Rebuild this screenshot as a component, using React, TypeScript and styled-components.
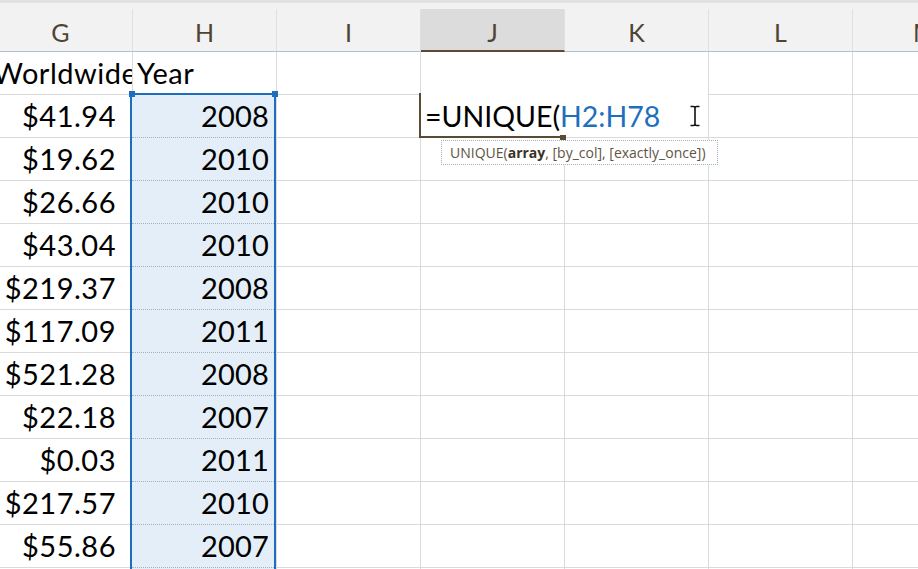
import React from "react";
import styled, { createGlobalStyle } from "styled-components";

const GRID = "#dadada";
const BROWN = "#5c4a32";
const BLUE = "#1e6ec0";

const GlobalStyle = createGlobalStyle`
  html, body { margin: 0; padding: 0; background: #fff; overflow: hidden; }
  body { font-family: Lato, "Noto Sans", sans-serif; }
`;

const Page = styled.div`
  width: 918px;
  height: 569px;
  overflow: hidden;
  background: #fff;
  display: flex;
  flex-direction: column;
`;

const TopStrip = styled.div`
  flex: none;
  height: 3px;
  background: #e1e1e1;
`;

const HeaderRow = styled.div`
  flex: none;
  display: flex;
  height: 49px;
  box-sizing: border-box;
  padding-top: 6px;
  margin-left: -11px;
  background: #f2f2f2;
`;

const HeaderCell = styled.div<{ $selected?: boolean }>`
  flex: none;
  width: 144px;
  height: 43px;
  box-sizing: border-box;
  padding-top: 8px;
  border-right: 1px solid #d9e2eb;
  border-bottom: ${(p) => (p.$selected ? `2px solid ${BROWN}` : "1px solid #b3bfcb")};
  background: ${(p) => (p.$selected ? "#dcdcdc" : "transparent")};
  text-align: center;
  font-family: Lato, sans-serif;
  font-size: 25px;
  line-height: 30px;
  color: #4d4434;
`;

const Sheet = styled.div`
  flex: 1;
  display: flex;
  align-items: flex-start;
  margin-left: -11px;
`;

const Column = styled.div`
  flex: none;
  width: 144px;
  display: flex;
  flex-direction: column;
`;

const Cell = styled.div<{ $align?: "left" | "right"; $padRight?: number }>`
  flex: none;
  height: 43px;
  box-sizing: border-box;
  border-right: 1px solid ${GRID};
  border-bottom: 1px solid ${GRID};
  padding: 4px ${(p) => p.$padRight ?? 6}px 0 4px;
  text-align: ${(p) => p.$align ?? "left"};
  font-family: Lato, sans-serif;
  font-size: 29px;
  letter-spacing: 0.5px;
  line-height: 34px;
  color: #000;
  white-space: nowrap;
  overflow: hidden;
`;

const Selection = styled.div`
  flex: none;
  position: relative;
  width: 146px;
  margin: -2px 0 0 -3px;
  box-sizing: border-box;
  border: 2px solid ${BLUE};
  border-bottom: none;
  background: #e3eef9;
  box-shadow: 1px 0 0 ${GRID};
  display: flex;
  flex-direction: column;

  &::before,
  &::after {
    content: "";
    position: absolute;
    top: -4px;
    width: 6px;
    height: 6px;
    background: ${BLUE};
  }
  &::before { left: -3px; }
  &::after { right: -4px; }
`;

const SelCell = styled.div`
  flex: none;
  height: 43px;
  box-sizing: border-box;
  border-bottom: 1px dotted #a9b2bc;
  padding: 4px 5px 0 0;
  text-align: right;
  font-family: Lato, sans-serif;
  font-size: 29px;
  letter-spacing: 0.2px;
  line-height: 34px;
  color: #000;
`;

const EditorGroup = styled.div`
  flex: none;
  width: 288px;
  display: flex;
  flex-direction: column;
`;

const Editor = styled.div`
  flex: none;
  height: 86px;
  box-sizing: border-box;
  border-right: 1px solid ${GRID};
  border-bottom: 1px solid ${GRID};
  background: #fff;
  display: flex;
  flex-direction: column;
  justify-content: flex-end;
`;

const ActiveRow = styled.div`
  position: relative;
  height: 42px;
  box-sizing: border-box;
  padding: 4px 0 0 4px;
  font-family: Lato, sans-serif;
  font-size: 28.5px;
  letter-spacing: 0;
  line-height: 34px;
  white-space: nowrap;
  color: #000;

  &::before {
    content: "";
    position: absolute;
    left: -2px;
    top: -2px;
    bottom: -1px;
    width: 144px;
    box-sizing: border-box;
    border-left: 2px solid ${BROWN};
    border-bottom: 2px solid ${BROWN};
  }
  &::after {
    content: "";
    position: absolute;
    left: 139px;
    top: 40px;
    width: 6px;
    height: 5px;
    background: ${BROWN};
  }
`;

const Ref = styled.span`
  color: #1f6fbf;
`;

const Cursor = styled.svg`
  position: absolute;
  left: 268px;
  top: 10px;
`;

const Tooltip = styled.div`
  position: absolute;
  left: 20px;
  top: 45px;
  z-index: 2;
  height: 25px;
  box-sizing: border-box;
  padding: 0 11px 0 8px;
  border: 1px dotted #9fb1c4;
  background: #fff;
  font-family: "Open Sans", sans-serif;
  font-size: 14px;
  line-height: 23px;
  color: #5f5444;
  white-space: nowrap;

  b {
    font-weight: 700;
    color: #3b3226;
  }
`;

const Pair = styled.div`
  display: flex;
`;

const headers = ["G", "H", "I", "J", "K", "L", "M"];
const worldwide = ["$41.94", "$19.62", "$26.66", "$43.04", "$219.37", "$117.09", "$521.28", "$22.18", "$0.03", "$217.57", "$55.86"];
const years = ["2008", "2010", "2010", "2010", "2008", "2011", "2008", "2007", "2011", "2010", "2007"];

const empty = (n: number, key: string) =>
  Array.from({ length: n }, (_, i) => <Cell key={`${key}${i}`} />);

const beam =
  "M1.5 1.5H4.5Q6 1.5 6 3Q6 1.5 7.5 1.5H10.5M6 3V19M1.5 20.5H4.5Q6 20.5 6 19Q6 20.5 7.5 20.5H10.5";

export default function App() {
  return (
    <>
      <GlobalStyle />
      <Page>
        <TopStrip />
        <HeaderRow>
          {headers.map((h) => (
            <HeaderCell key={h} $selected={h === "J"}>
              {h}
            </HeaderCell>
          ))}
        </HeaderRow>
        <Sheet>
          <Column>
            <Cell>Worldwide</Cell>
            {worldwide.map((v, i) => (
              <Cell key={i} $align="right" $padRight={16}>
                {v}
              </Cell>
            ))}
            <Cell />
          </Column>
          <Column>
            <Cell>Year</Cell>
            <Selection>
              {years.map((y, i) => (
                <SelCell key={i}>{y}</SelCell>
              ))}
              <SelCell />
            </Selection>
          </Column>
          <Column>{empty(13, "i")}</Column>
          <EditorGroup>
            <Editor>
              <ActiveRow>
                =UNIQUE(<Ref>H2:H78</Ref>
                <Cursor width="12" height="22" viewBox="0 0 12 22">
                  <path d={beam} fill="none" stroke="#fff" strokeWidth="3.5" />
                  <path d={beam} fill="none" stroke="#111" strokeWidth="1.6" />
                </Cursor>
                <Tooltip>
                  UNIQUE(<b>array</b>, [by_col], [exactly_once])
                </Tooltip>
              </ActiveRow>
            </Editor>
            <Pair>
              <Column>{empty(11, "j")}</Column>
              <Column>{empty(11, "k")}</Column>
            </Pair>
          </EditorGroup>
          <Column>{empty(13, "l")}</Column>
          <Column>{empty(13, "m")}</Column>
        </Sheet>
      </Page>
    </>
  );
}
